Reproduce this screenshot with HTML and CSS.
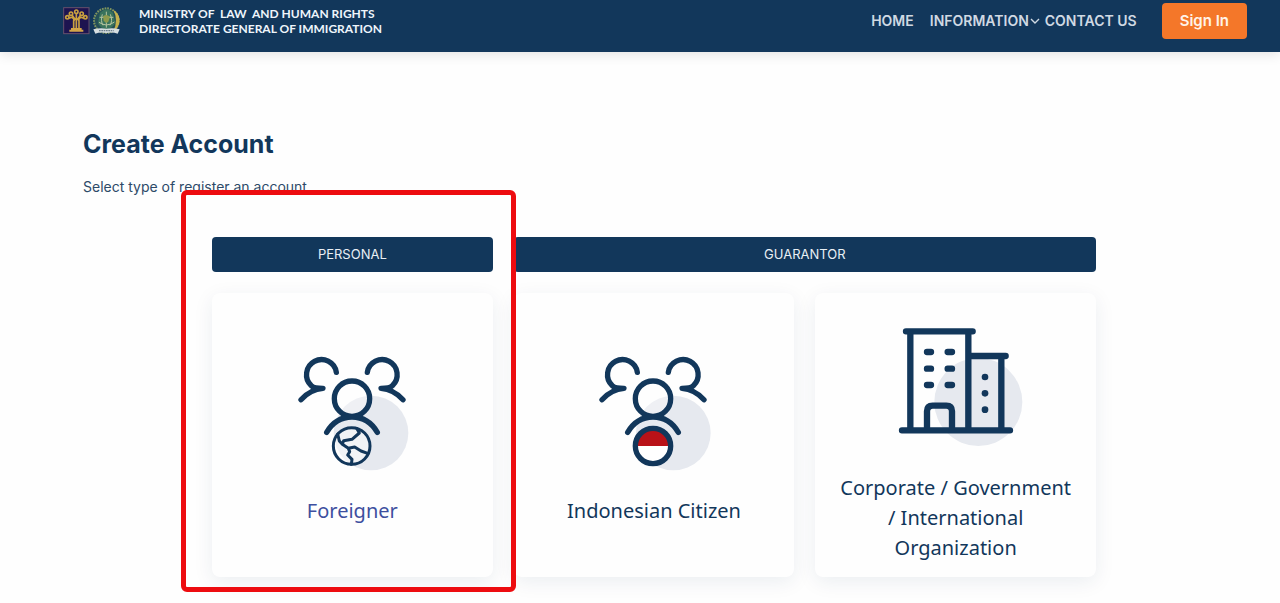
FILE: index.html
```html
<!DOCTYPE html>
<html lang="en">
<head>
<meta charset="utf-8">
<meta name="viewport" content="width=device-width, initial-scale=1">
<title>Create Account</title>
<link rel="stylesheet" href="styles.css">
</head>
<body>
<header class="topbar">
  <a class="brand" href="#">
    <svg class="brand-logo" viewBox="0 0 174 84" aria-hidden="true">
      <rect x="2" y="2" width="76" height="78" fill="#1d1450" stroke="#66506c" stroke-width="3"/>
      <g fill="none" stroke="#c9a040" stroke-width="5">
        <circle cx="40" cy="14" r="5"/><circle cx="24" cy="20" r="5"/><circle cx="56" cy="20" r="5"/><circle cx="13" cy="31" r="5"/><circle cx="67" cy="31" r="5"/>
        <path d="M18 34Q31 26 34 42M62 34Q49 26 46 42M27 24L37 38M53 24L43 38M40 19V66M32 40V64M48 40V64"/>
      </g>
      <path d="M24 63H56V68H61V74H19V68H24Z" fill="#d3a548"/>
      <circle cx="130" cy="41" r="37" fill="#244f58" stroke="#82965f" stroke-width="6" stroke-dasharray="5 3"/>
      <path d="M151 8Q174 24 169 48Q164 66 151 73Q167 39 151 8Z" fill="#c4b04d"/>
      <path d="M111 17Q130 -2 150 17L157 48Q145 67 130 68Q111 64 105 48Z" fill="#39735c"/>
      <g fill="none" stroke="#b6c5a0" stroke-width="3">
        <path d="M130 14V62M118 22Q112 42 120 55M142 22Q150 42 141 55M108 46Q118 53 130 54Q145 53 154 45M110 31H151"/>
      </g>
      <path d="M120 28Q130 19 141 29L136 44L130 48L122 42Z" fill="#8d9a4d"/>
      <path d="M91 67Q112 61 130 65Q151 61 170 67L164 80Q148 74 130 78Q112 74 97 80Z" fill="#d5dde0"/>
      <path d="M108 71H152" stroke="#6c7f8b" stroke-width="4" stroke-dasharray="5 2"/>
    </svg>
    <span class="brand-name">MINISTRY OF&nbsp; LAW&nbsp; AND HUMAN RIGHTS<br>DIRECTORATE GENERAL OF IMMIGRATION</span>
  </a>
  <nav class="nav" aria-label="Main">
    <a class="nav-link nav-home" href="#">HOME</a>
    <a class="nav-link nav-info" href="#">INFORMATION<svg class="chevron" viewBox="0 0 10 6" aria-hidden="true"><path d="M1 1L5 5L9 1"/></svg></a>
    <a class="nav-link" href="#">CONTACT US</a>
    <button class="sign-in" type="button">Sign In</button>
  </nav>
</header>

<main class="page">
  <h1 class="title">Create Account</h1>
  <p class="subtitle">Select type of register an account</p>

  <div class="groups">
    <section class="group highlighted">
      <h2 class="group-title">PERSONAL</h2>
      <div class="cards">
        <a class="card card-active" href="#">
          <svg class="icon" viewBox="-8 12 450 405" aria-hidden="true">
            <circle class="halo" cx="274" cy="276" r="112"/>
            <g class="line">
              <path d="M170 94A45 45 0 1 0 95 134Q101 142 130 142Q92 145 64 176"/>
              <path d="M263 94A45 45 0 1 1 338 134Q332 142 304 142Q342 145 370 176"/>
              <circle cx="217" cy="173" r="53" fill="#fff" fill-opacity="0.35"/>
              <path d="M141 274Q168 228 217 228Q266 228 293 274"/>
            </g>
            <circle cx="216" cy="315" r="57" fill="#fff" fill-opacity="0.45"/>
            <g class="line globe">
              <circle cx="216" cy="315" r="55"/>
              <path d="M174 279L179 300L188 310L192 299L217 295L239 276L232 263M188 310L206 322L210 332L204 342L217 355L215 370M206 322L225 318L244 330L264 337"/>
            </g>
          </svg>
          <span class="card-label">Foreigner</span>
        </a>
      </div>
    </section>

    <section class="group group-wide">
      <h2 class="group-title">GUARANTOR</h2>
      <div class="cards cards-pair">
        <a class="card" href="#">
          <svg class="icon" viewBox="-3 12 450 405" aria-hidden="true">
            <circle class="halo" cx="280" cy="276" r="112"/>
            <g class="line">
              <path d="M172 94A45 45 0 1 0 97 134Q103 142 132 142Q94 145 66 176"/>
              <path d="M265 94A45 45 0 1 1 340 134Q334 142 306 142Q344 145 372 176"/>
              <circle cx="219" cy="173" r="53" fill="#fff" fill-opacity="0.35"/>
              <path d="M143 274Q170 228 219 228Q268 228 295 274"/>
            </g>
            <circle cx="219" cy="315" r="53" fill="#fff"/>
            <path d="M166 315A53 53 0 0 1 272 315Z" fill="#b91218"/>
            <circle class="line" cx="219" cy="315" r="53"/>
          </svg>
          <span class="card-label">Indonesian Citizen</span>
        </a>
        <a class="card" href="#">
          <svg class="icon icon-tall" viewBox="3 -9 450 450" aria-hidden="true">
            <circle class="halo" cx="295" cy="276" r="132"/>
            <g class="line building">
              <path d="M78 64H278M91 64V360M265 64V360M265 138H377M364 138V360M66 361H390M141 360V304Q141 287 158 287H199Q216 287 216 304V360"/>
              <path d="M141 126H153M203 126H216M141 176H153M203 176H216M141 225H153M203 225H216"/>
            </g>
            <g fill="#12375b"><circle cx="315" cy="201" r="10"/><circle cx="315" cy="250" r="10"/><circle cx="315" cy="299" r="10"/></g>
          </svg>
          <span class="card-label">Corporate / Government / International Organization</span>
        </a>
      </div>
    </section>
  </div>
</main>
</body>
</html>
```
FILE: styles.css
```css
* {
  box-sizing: border-box;
}

body {
  margin: 0;
  background: #fefefe;
  color: #12375b;
  font-family: Inter, "Liberation Sans", sans-serif;
}

a {
  color: inherit;
  text-decoration: none;
}

.topbar {
  display: flex;
  align-items: center;
  justify-content: space-between;
  padding: 3px 33px 13px 63px;
  background: #12375b;
  box-shadow: 0 2px 12px rgba(0, 0, 0, 0.12);
}

.brand {
  display: flex;
  align-items: center;
  gap: 18px;
}

.brand-logo {
  width: 58px;
  height: 28px;
}

.brand-name {
  color: #eef5fb;
  font: 700 12px/15px Lato, "Open Sans", sans-serif;
}

.nav {
  display: flex;
  align-items: center;
}

.nav-link {
  color: #d0d9e3;
  font-size: 14px;
  font-weight: 600;
  line-height: 20px;
}

.nav-home {
  margin-right: 16px;
}

.nav-info {
  display: flex;
  align-items: center;
  gap: 1px;
  margin-right: 5px;
}

.chevron {
  width: 10px;
  height: 6px;
  fill: none;
  stroke: currentColor;
  stroke-width: 1.4;
}

.sign-in {
  margin-left: 25px;
  padding: 8px 18px;
  border: 0;
  border-radius: 4px;
  background: #f47729;
  color: #fff3e8;
  font: 600 15px/20px Inter, sans-serif;
}

.page {
  padding: 77px 55px 27px 83px;
}

.title {
  margin: 0;
  font-size: 25px;
  font-weight: 700;
  line-height: 30px;
}

.subtitle {
  margin: 17px 0 40px;
  color: #2d4a68;
  font-size: 14px;
  line-height: 21px;
}

.groups {
  display: grid;
  grid-template-columns: repeat(3, 1fr);
  gap: 21px;
  max-width: 884px;
  margin: 0 auto;
}

.group {
  display: flex;
  flex-direction: column;
  gap: 21px;
}

.group-wide {
  grid-column: span 2;
}

.highlighted {
  position: relative;
}

.highlighted::after {
  content: "";
  position: absolute;
  z-index: 1;
  inset: -47px -23px -15px -31px;
  border: 5px solid #ed0c10;
  border-radius: 6px;
  pointer-events: none;
}

.group-title {
  margin: 0;
  padding: 7px;
  border-radius: 4px;
  background: #12375b;
  color: #e9eff5;
  font-size: 13px;
  font-weight: 400;
  line-height: 21px;
  text-align: center;
}

.cards {
  display: grid;
  flex: 1;
  gap: 21px;
}

.cards-pair {
  grid-template-columns: repeat(2, 1fr);
}

.card {
  display: flex;
  flex-direction: column;
  align-items: center;
  justify-content: center;
  gap: 16px;
  padding: 14px 20px;
  border-radius: 8px;
  background: #fefefe;
  box-shadow: 0 5px 20px rgba(18, 55, 91, 0.08);
}

.card-label {
  font: 400 20px/30px "Noto Sans", "Open Sans", sans-serif;
  text-align: center;
}

.card-active .card-label {
  color: #3d4f9f;
}

.icon {
  width: 150px;
  height: 135px;
}

.icon-tall {
  height: 150px;
}

.halo {
  fill: #e6e9ef;
}

.line {
  fill: none;
  stroke: #12375b;
  stroke-width: 16;
  stroke-linecap: round;
  stroke-linejoin: round;
}

.globe {
  stroke-width: 9;
}

.building {
  stroke-width: 19;
}
```
